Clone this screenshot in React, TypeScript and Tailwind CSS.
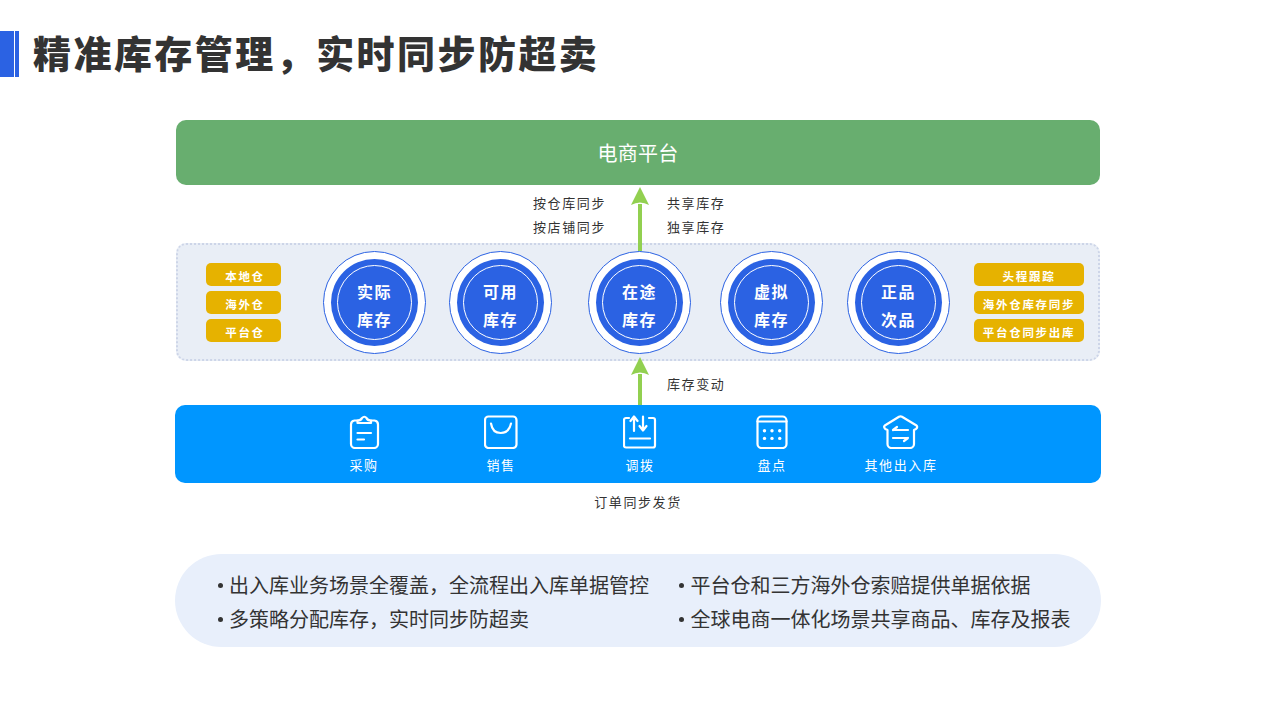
const sans = "font-['Noto_Sans_CJK_SC','Noto_Sans',sans-serif]";

function Arrow({ h, className }: { h: number; className: string }) {
  return (
    <svg width="20" height={h} viewBox={`0 0 20 ${h}`} className={className}>
      <path d="M8 17H12V200H8Z" fill="#92d050" />
      <path d="M10 0L19 18Q14.5 15.5 10 15.5Q5.5 15.5 1 18Z" fill="#92d050" />
    </svg>
  );
}

function Circle({ a, b, className }: { a: string; b: string; className: string }) {
  return (
    <div className={`w-[103px] h-[103px] shrink-0 rounded-full border-[1.5px] border-[#2b62e3] bg-white flex items-center justify-center ${className}`}>
      <div className="w-[87px] h-[87px] rounded-full bg-[#2b62e3] flex items-center justify-center">
        <div className="w-[75px] h-[75px] pt-[5px] rounded-full border border-white flex flex-col items-center justify-center text-white text-[16px] font-bold tracking-[1.4px] leading-[28px]">
          <span>{a}</span>
          <span>{b}</span>
        </div>
      </div>
    </div>
  );
}

function Pills({ items, className, inner }: { items: string[]; className: string; inner: string }) {
  return (
    <div className={`flex flex-col gap-[5px] mt-[18px] shrink-0 ${className}`}>
      {items.map((t) => (
        <div key={t} className={`h-[23px] pt-[2px] rounded-[5px] bg-[#e6b200] text-white text-[11.5px] font-bold tracking-[1.7px] leading-[23px] text-center ${inner}`}>
          {t}
        </div>
      ))}
    </div>
  );
}

const stroke = { fill: "none", stroke: "#fff", strokeWidth: 2.2, strokeLinecap: "round", strokeLinejoin: "round" } as const;

function IconClipboard() {
  return (
    <svg width="34" height="34" viewBox="0 0 34 34" {...stroke}>
      <path d="M10.5 5.5H7.5a4 4 0 0 0-3.5 4V29a4 4 0 0 0 4 4H27a4 4 0 0 0 4-4V9.5a4 4 0 0 0-3.5-4H24" />
      <path d="M10.5 8H24V5.5Q20.5 5.5 19.5 3Q17.5 0.5 15 3Q14 5.5 10.5 5.5Z" />
      <path d="M10.5 18H24" />
      <path d="M10.5 24.5H17" />
    </svg>
  );
}
function IconBag() {
  return (
    <svg width="34" height="34" viewBox="0 0 34 34" {...stroke}>
      <rect x="1" y="1.5" width="31.5" height="31.5" rx="3.5" />
      <path d="M7 8.5Q8.5 18 16.7 18Q25 18 27 8.5" />
    </svg>
  );
}
function IconAdjust() {
  return (
    <svg width="34" height="34" viewBox="0 0 34 34" {...stroke}>
      <path d="M6 3H3a2 2 0 0 0-2 2V30.5a2 2 0 0 0 2 2H30a2 2 0 0 0 2-2V5a2 2 0 0 0-2-2H26" />
      <path d="M7 23.5H27" />
      <path d="M11 16V2M7.5 6L11 1.5L14.5 6" />
      <path d="M20 1.5V15M16.5 11L20 15.5L23.5 11" />
    </svg>
  );
}
function IconCalendar() {
  return (
    <svg width="34" height="34" viewBox="0 0 34 34" {...stroke}>
      <rect x="2.5" y="1.5" width="29" height="31.5" rx="4" />
      <path d="M2.5 6.5H31.5" />
      <g fill="#fff" stroke="none">
        <circle cx="9.5" cy="15.8" r="1.7" />
        <circle cx="17" cy="15.8" r="1.7" />
        <circle cx="24.7" cy="15.8" r="1.7" />
        <circle cx="9.5" cy="23.4" r="1.7" />
        <circle cx="17" cy="23.4" r="1.7" />
        <circle cx="24.7" cy="23.4" r="1.7" />
      </g>
    </svg>
  );
}
function IconHouse() {
  return (
    <svg width="36" height="34" viewBox="0 0 36 34" {...stroke}>
      <path d="M4.5 15V29a4 4 0 0 0 4 4H27a4 4 0 0 0 4-4V15L33 14Q35 12 33.5 10.5L19 1.8Q17.5 1 16 1.8L1.8 10.5Q0.3 12 2.3 14Z" />
      <path d="M10 15H25M10 15L14 12" />
      <path d="M10 23H25M25 23L21 26" />
    </svg>
  );
}

function Tool({ label, className, children }: { label: string; className: string; children: React.ReactNode }) {
  return (
    <div className={`w-[100px] shrink-0 flex flex-col items-center ${className}`}>
      <div className="h-[34px] flex items-center justify-center">{children}</div>
      <div className="mt-[4px] text-white text-[13px] tracking-[1.6px] leading-[24px]">{label}</div>
    </div>
  );
}

function Bullet({ children }: { children: string }) {
  return (
    <div className="flex items-start leading-[34px] text-[20px] text-[#333333]">
      <span className="w-[5px] h-[5px] rounded-full bg-[#333333] mt-[15px] mr-[6.5px] shrink-0" />
      <span>{children}</span>
    </div>
  );
}

export default function App() {
  return (
    <div className={`w-[1275px] h-[715px] bg-white overflow-hidden ${sans}`}>
      <div className="h-[31px]" />
      <header className="h-[46px] flex items-start">
        <div className="w-[13.5px] h-[46px] bg-[#2b62e3]" />
        <div className="w-[3.5px] h-[46px] bg-[#2b62e3] ml-[1.5px]" />
        <h1 className="ml-[14.5px] text-[38px] leading-[46px] -mt-[2px] font-black tracking-[2.45px] text-[#333333] whitespace-nowrap">
          {"精准库存管理\uFF0C实时同步防超卖"}
        </h1>
      </header>

      <main className="ml-[175px] w-[926px] mt-[43px]">
        <div className="mx-px h-[65px] rounded-[10px] bg-[#68ae6f] flex items-center justify-center text-white text-[20px] tracking-[0.2px]">
          电商平台
        </div>

        <div className="relative h-[58px] pt-[6px] flex text-[13px] tracking-[1.6px] leading-[24px] text-[#333333]">
          <div className="ml-[358px] w-[80px]">
            <div>按仓库同步</div>
            <div>按店铺同步</div>
          </div>
          <div className="ml-[54px]">
            <div>共享库存</div>
            <div>独享库存</div>
          </div>
          <Arrow h={64} className="absolute left-[455px] top-[2px] z-10" />
        </div>

        <div className="relative mx-px h-[118px] rounded-[10px] border-2 border-dotted border-[#cdd5e8] bg-[#e9eef6] flex items-start pl-[28px]">
          <Pills items={["本地仓", "海外仓", "平台仓"]} className="w-[75px]" inner="pl-[3px]" />
          <Circle a="实际" b="库存" className="ml-[42px] mt-[6px]" />
          <Circle a="可用" b="库存" className="ml-[23px] mt-[6px]" />
          <Circle a="在途" b="库存" className="ml-[36px] mt-[6px]" />
          <Circle a="虚拟" b="库存" className="ml-[29px] mt-[6px]" />
          <Circle a="正品" b="次品" className="ml-[24px] mt-[6px]" />
          <Pills items={["头程跟踪", "海外仓库存同步", "平台仓同步出库"]} className="w-[110px] ml-[24px]" inner="" />
        </div>

        <div className="relative h-[44px] pt-[11px] pl-[492px] text-[13px] tracking-[1.6px] leading-[24px] text-[#333333]">
          库存变动
          <Arrow h={48} className="absolute left-[455px] -top-[4px] z-10" />
        </div>

        <div className="h-[78px] rounded-[10px] bg-[#0096ff] flex items-start pt-[10px]">
          <Tool label="采购" className="ml-[139px]"><IconClipboard /></Tool>
          <Tool label="销售" className="ml-[37px]"><IconBag /></Tool>
          <Tool label="调拨" className="ml-[39px]"><IconAdjust /></Tool>
          <Tool label="盘点" className="ml-[32px]"><IconCalendar /></Tool>
          <Tool label="其他出入库" className="ml-[29px]"><IconHouse /></Tool>
        </div>

        <div className="mt-[7px] text-center text-[13px] tracking-[1.6px] leading-[24px] text-[#333333]">
          订单同步发货
        </div>

        <div className="mt-[40px] h-[93px] rounded-[46.5px] bg-[#e8effb] pt-[14px] pl-[42.5px] grid grid-cols-[461.5px_1fr] content-start">
          <Bullet>{"出入库业务场景全覆盖\uFF0C全流程出入库单据管控"}</Bullet>
          <Bullet>平台仓和三方海外仓索赔提供单据依据</Bullet>
          <Bullet>{"多策略分配库存\uFF0C实时同步防超卖"}</Bullet>
          <Bullet>全球电商一体化场景共享商品、库存及报表</Bullet>
        </div>
      </main>
    </div>
  );
}
